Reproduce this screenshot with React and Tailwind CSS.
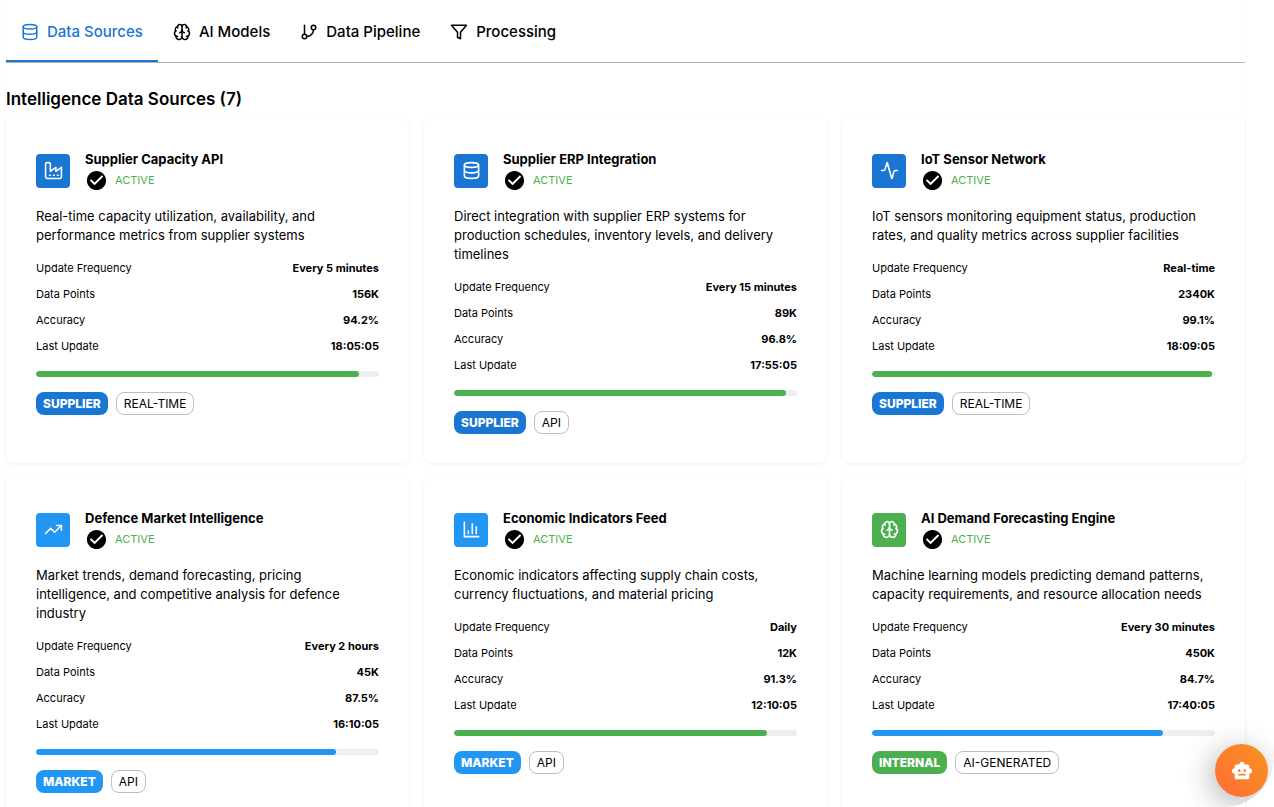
import React, { useState } from "react";
import {
  Activity,
  Brain,
  Database,
  GitBranch,
  TrendingUp,
} from "lucide-react";
import { MdCheckCircle, MdSmartToy } from "react-icons/md";

const Icon = ({ size = 18, children }) => (
  <svg
    width={size}
    height={size}
    viewBox="0 0 24 24"
    fill="none"
    stroke="currentColor"
    strokeWidth="2"
    strokeLinecap="round"
    strokeLinejoin="round"
    aria-hidden="true"
  >
    {children}
  </svg>
);

const Factory = ({ size }) => (
  <Icon size={size}>
    <path d="M2 20a2 2 0 0 0 2 2h16a2 2 0 0 0 2-2V8l-7 5V8l-7 5V4a2 2 0 0 0-2-2H4a2 2 0 0 0-2 2Z" />
    <path d="M17 18h1" />
    <path d="M12 18h1" />
    <path d="M7 18h1" />
  </Icon>
);

const BarChart = ({ size }) => (
  <Icon size={size}>
    <path d="M3 3v18h18" />
    <path d="M18 17V9" />
    <path d="M13 17V5" />
    <path d="M8 17v-3" />
  </Icon>
);

const Filter = ({ size }) => (
  <Icon size={size}>
    <polygon points="22 3 2 3 10 12.46 10 19 14 21 14 12.46 22 3" />
  </Icon>
);

const tabs = [
  { id: "sources", label: "Data Sources", icon: Database },
  { id: "models", label: "AI Models", icon: Brain },
  { id: "pipeline", label: "Data Pipeline", icon: GitBranch },
  { id: "processing", label: "Processing", icon: Filter },
];

const sources = [
  {
    name: "Supplier Capacity API",
    icon: Factory,
    description: "Real-time capacity utilization, availability, and performance metrics from supplier systems",
    frequency: "Every 5 minutes",
    points: "156K",
    accuracy: 94.2,
    updated: "18:05:05",
    category: "SUPPLIER",
    type: "REAL-TIME",
  },
  {
    name: "Supplier ERP Integration",
    icon: Database,
    description: "Direct integration with supplier ERP systems for production schedules, inventory levels, and delivery timelines",
    frequency: "Every 15 minutes",
    points: "89K",
    accuracy: 96.8,
    updated: "17:55:05",
    category: "SUPPLIER",
    type: "API",
  },
  {
    name: "IoT Sensor Network",
    icon: Activity,
    description: "IoT sensors monitoring equipment status, production rates, and quality metrics across supplier facilities",
    frequency: "Real-time",
    points: "2340K",
    accuracy: 99.1,
    updated: "18:09:05",
    category: "SUPPLIER",
    type: "REAL-TIME",
  },
  {
    name: "Defence Market Intelligence",
    icon: TrendingUp,
    description: "Market trends, demand forecasting, pricing intelligence, and competitive analysis for defence industry",
    frequency: "Every 2 hours",
    points: "45K",
    accuracy: 87.5,
    updated: "16:10:05",
    category: "MARKET",
    type: "API",
  },
  {
    name: "Economic Indicators Feed",
    icon: BarChart,
    description: "Economic indicators affecting supply chain costs, currency fluctuations, and material pricing",
    frequency: "Daily",
    points: "12K",
    accuracy: 91.3,
    updated: "12:10:05",
    category: "MARKET",
    type: "API",
  },
  {
    name: "AI Demand Forecasting Engine",
    icon: Brain,
    description: "Machine learning models predicting demand patterns, capacity requirements, and resource allocation needs",
    frequency: "Every 30 minutes",
    points: "450K",
    accuracy: 84.7,
    updated: "17:40:05",
    category: "INTERNAL",
    type: "AI-GENERATED",
  },
];

const categoryColors = {
  SUPPLIER: "bg-[#1976d2]",
  MARKET: "bg-[#2196f3]",
  INTERNAL: "bg-[#4caf50]",
};

const SourceCard = ({ source }) => {
  const SourceIcon = source.icon;
  const color = categoryColors[source.category];
  const rows = [
    ["Update Frequency", source.frequency],
    ["Data Points", source.points],
    ["Accuracy", `${source.accuracy}%`],
    ["Last Update", source.updated],
  ];

  return (
    <article className="rounded-lg bg-white px-[30px] pt-[30px] pb-[29px] shadow-[0_1px_4px_rgba(0,0,0,0.06)]">
      <div className="flex items-center gap-[15px]">
        <div className={`flex size-[34px] items-center justify-center rounded text-white ${color}`}>
          <SourceIcon size={19} />
        </div>
        <div>
          <h3 className="text-[13px] leading-5 font-bold">{source.name}</h3>
          <div className="flex items-center gap-[7px]">
            <MdCheckCircle size={23} />
            <span className="text-[11px] text-[#4caf50]">ACTIVE</span>
          </div>
        </div>
      </div>
      <p className="mt-[15px] text-[13px] leading-[19px]">{source.description}</p>
      <dl className="mt-[10px] text-[11px]">
        {rows.map(([label, value]) => (
          <div key={label} className="flex h-[26px] items-center justify-between">
            <dt>{label}</dt>
            <dd className="font-bold">{value}</dd>
          </div>
        ))}
      </dl>
      <div className="mt-3 h-[6px] overflow-hidden rounded-full bg-[#eeeeee]">
        <div
          className={`h-full rounded-full ${source.accuracy >= 90 ? "bg-[#4caf50]" : "bg-[#2196f3]"}`}
          style={{ width: `${source.accuracy}%` }}
        />
      </div>
      <div className="mt-[15px] flex gap-2 text-xs">
        <span className={`flex h-[23px] items-center rounded-lg px-[7px] font-extrabold text-white ${color}`}>
          {source.category}
        </span>
        <span className="flex h-[23px] items-center rounded-lg border border-[#bdbdbd] px-[7px]">
          {source.type}
        </span>
      </div>
    </article>
  );
};

const App = () => {
  const [activeTab, setActiveTab] = useState("sources");

  return (
    <div className="h-screen overflow-hidden bg-white pr-[29px] pl-[6px] font-['Inter',sans-serif] text-black">
      <main className="shadow-[0_0_2px_rgba(0,0,0,0.06)]">
        <nav className="flex h-[63px] border-b border-[#b0b0b0]">
          {tabs.map(({ id, label, icon: TabIcon }) => (
            <button
              key={id}
              type="button"
              onClick={() => setActiveTab(id)}
              className={`flex items-center gap-2 border-b-2 px-[15px] pt-1 text-[15px] font-medium ${
                activeTab === id ? "border-[#1976d2] text-[#1976d2]" : "border-transparent"
              }`}
            >
              <TabIcon size={18} />
              {label}
            </button>
          ))}
        </nav>
        <h2 className="mt-6 text-[17px] leading-6 font-semibold">Intelligence Data Sources (7)</h2>
        <div className="mt-2 grid grid-cols-3 gap-[15px]">
          {sources.map((source) => (
            <SourceCard key={source.name} source={source} />
          ))}
        </div>
      </main>
      <div className="pointer-events-none fixed right-0 bottom-0 flex size-32 items-end justify-end overflow-hidden rounded-br-[50px] pr-[6px] pb-[10px]">
        <button
          type="button"
          aria-label="Open assistant"
          className="pointer-events-auto flex size-[53px] items-center justify-center rounded-full bg-linear-to-tr from-[#ff6b35] to-[#f7931e] text-white shadow-[-4px_6px_30px_rgba(0,0,0,0.3)]"
        >
          <MdSmartToy size={22} />
        </button>
      </div>
    </div>
  );
};

export default App;
